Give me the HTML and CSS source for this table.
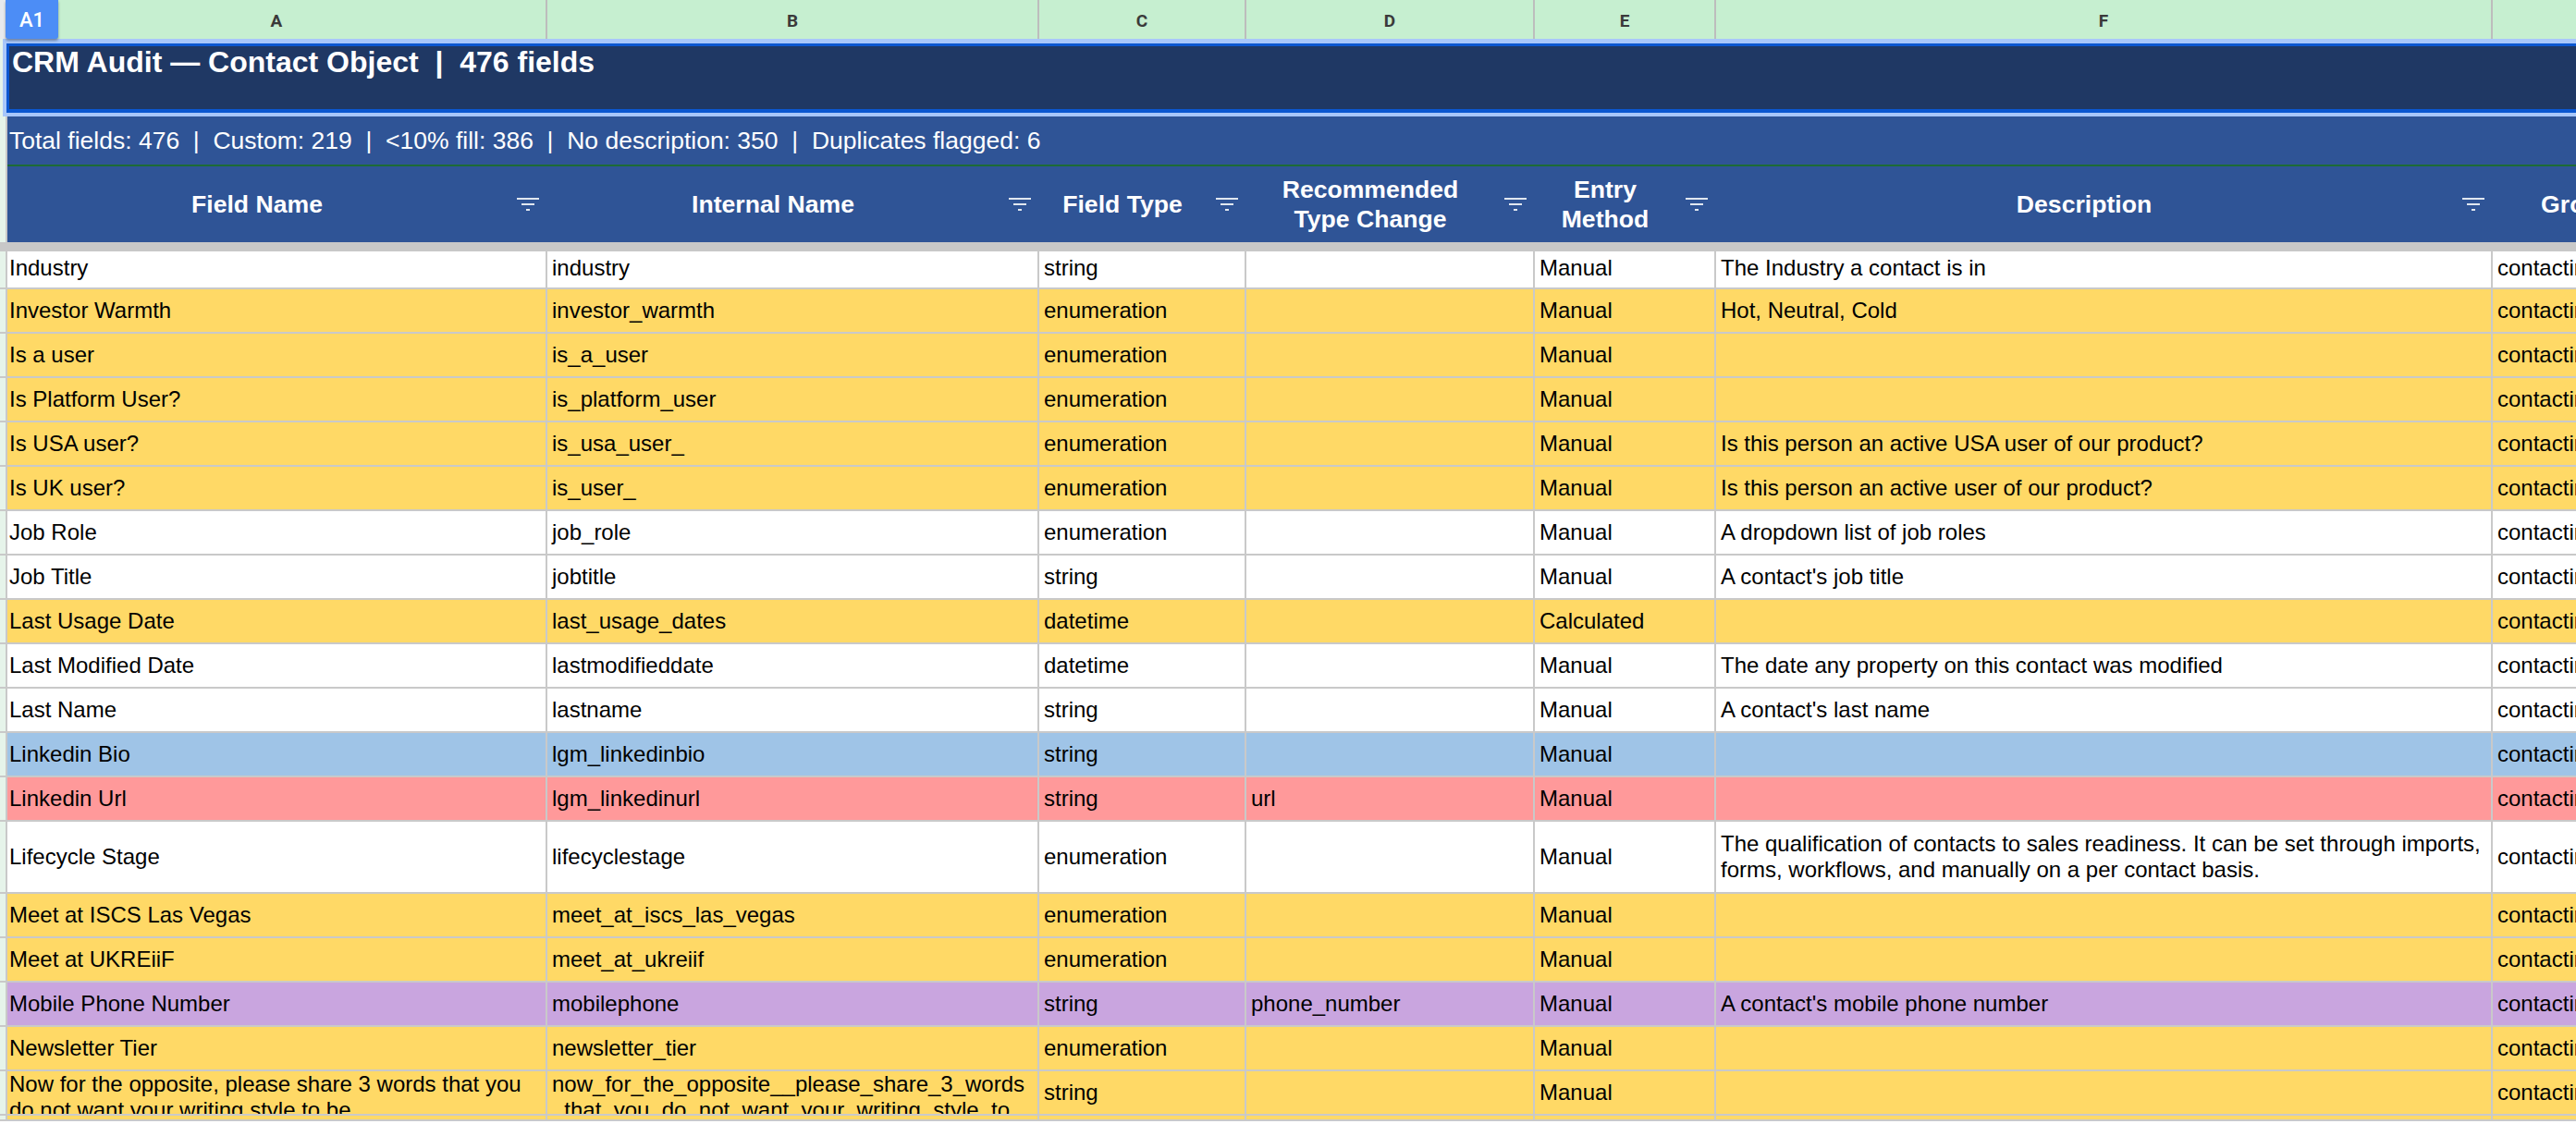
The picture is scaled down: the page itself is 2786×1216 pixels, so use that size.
FILE: index.html
```html
<!DOCTYPE html>
<html>
<head>
<meta charset="utf-8">
<title>CRM Audit — Contact Object</title>
<link rel="stylesheet" href="styles.css">
</head>
<body>
<div class="badge">A1</div>
<div class="sheet">
  <div class="row colhead">
    <div class="c corner"></div><div class="c">A</div><div class="c">B</div><div class="c">C</div><div class="c">D</div><div class="c">E</div><div class="c">F</div><div class="c">G</div>
  </div>
  <div class="title-row">
    <div class="title">CRM Audit — Contact Object  |  476 fields</div>
  </div>
  <div class="stats-row">
    <div class="strip"></div>
    <div class="stats">Total fields: 476  |  Custom: 219  |  &lt;10% fill: 386  |  No description: 350  |  Duplicates flagged: 6</div>
  </div>
  <div class="row hrow">
    <div class="strip"></div>
    <div class="hc"><span class="lbl">Field Name</span><svg class="flt" viewBox="0 0 24 14"><rect x="0" y="0" width="24" height="2"/><rect x="5" y="6" width="14" height="2"/><rect x="10" y="12" width="4" height="2"/></svg></div>
    <div class="hc"><span class="lbl">Internal Name</span><svg class="flt" viewBox="0 0 24 14"><rect x="0" y="0" width="24" height="2"/><rect x="5" y="6" width="14" height="2"/><rect x="10" y="12" width="4" height="2"/></svg></div>
    <div class="hc"><span class="lbl">Field Type</span><svg class="flt" viewBox="0 0 24 14"><rect x="0" y="0" width="24" height="2"/><rect x="5" y="6" width="14" height="2"/><rect x="10" y="12" width="4" height="2"/></svg></div>
    <div class="hc"><span class="lbl">Recommended<br>Type Change</span><svg class="flt" viewBox="0 0 24 14"><rect x="0" y="0" width="24" height="2"/><rect x="5" y="6" width="14" height="2"/><rect x="10" y="12" width="4" height="2"/></svg></div>
    <div class="hc"><span class="lbl">Entry<br>Method</span><svg class="flt" viewBox="0 0 24 14"><rect x="0" y="0" width="24" height="2"/><rect x="5" y="6" width="14" height="2"/><rect x="10" y="12" width="4" height="2"/></svg></div>
    <div class="hc"><span class="lbl">Description</span><svg class="flt" viewBox="0 0 24 14"><rect x="0" y="0" width="24" height="2"/><rect x="5" y="6" width="14" height="2"/><rect x="10" y="12" width="4" height="2"/></svg></div>
    <div class="hc"><span class="lbl">Group</span><svg class="flt" viewBox="0 0 24 14"><rect x="0" y="0" width="24" height="2"/><rect x="5" y="6" width="14" height="2"/><rect x="10" y="12" width="4" height="2"/></svg></div>
  </div>
  <div class="freeze"></div>

  <div class="row drow first"><div class="strip"></div><div class="cell a">Industry</div><div class="cell">industry</div><div class="cell">string</div><div class="cell"></div><div class="cell">Manual</div><div class="cell">The Industry a contact is in</div><div class="cell">contactinformation</div></div>
  <div class="row drow yellow"><div class="strip"></div><div class="cell a">Investor Warmth</div><div class="cell">investor_warmth</div><div class="cell">enumeration</div><div class="cell"></div><div class="cell">Manual</div><div class="cell">Hot, Neutral, Cold</div><div class="cell">contactinformation</div></div>
  <div class="row drow yellow"><div class="strip"></div><div class="cell a">Is a user</div><div class="cell">is_a_user</div><div class="cell">enumeration</div><div class="cell"></div><div class="cell">Manual</div><div class="cell"></div><div class="cell">contactinformation</div></div>
  <div class="row drow yellow"><div class="strip"></div><div class="cell a">Is Platform User?</div><div class="cell">is_platform_user</div><div class="cell">enumeration</div><div class="cell"></div><div class="cell">Manual</div><div class="cell"></div><div class="cell">contactinformation</div></div>
  <div class="row drow yellow"><div class="strip"></div><div class="cell a">Is USA user?</div><div class="cell">is_usa_user_</div><div class="cell">enumeration</div><div class="cell"></div><div class="cell">Manual</div><div class="cell">Is this person an active USA user of our product?</div><div class="cell">contactinformation</div></div>
  <div class="row drow yellow"><div class="strip"></div><div class="cell a">Is UK user?</div><div class="cell">is_user_</div><div class="cell">enumeration</div><div class="cell"></div><div class="cell">Manual</div><div class="cell">Is this person an active user of our product?</div><div class="cell">contactinformation</div></div>
  <div class="row drow"><div class="strip"></div><div class="cell a">Job Role</div><div class="cell">job_role</div><div class="cell">enumeration</div><div class="cell"></div><div class="cell">Manual</div><div class="cell">A dropdown list of job roles</div><div class="cell">contactinformation</div></div>
  <div class="row drow"><div class="strip"></div><div class="cell a">Job Title</div><div class="cell">jobtitle</div><div class="cell">string</div><div class="cell"></div><div class="cell">Manual</div><div class="cell">A contact's job title</div><div class="cell">contactinformation</div></div>
  <div class="row drow yellow"><div class="strip"></div><div class="cell a">Last Usage Date</div><div class="cell">last_usage_dates</div><div class="cell">datetime</div><div class="cell"></div><div class="cell">Calculated</div><div class="cell"></div><div class="cell">contactinformation</div></div>
  <div class="row drow"><div class="strip"></div><div class="cell a">Last Modified Date</div><div class="cell">lastmodifieddate</div><div class="cell">datetime</div><div class="cell"></div><div class="cell">Manual</div><div class="cell">The date any property on this contact was modified</div><div class="cell">contactinformation</div></div>
  <div class="row drow"><div class="strip"></div><div class="cell a">Last Name</div><div class="cell">lastname</div><div class="cell">string</div><div class="cell"></div><div class="cell">Manual</div><div class="cell">A contact's last name</div><div class="cell">contactinformation</div></div>
  <div class="row drow blue"><div class="strip"></div><div class="cell a">Linkedin Bio</div><div class="cell">lgm_linkedinbio</div><div class="cell">string</div><div class="cell"></div><div class="cell">Manual</div><div class="cell"></div><div class="cell">contactinformation</div></div>
  <div class="row drow red"><div class="strip"></div><div class="cell a">Linkedin Url</div><div class="cell">lgm_linkedinurl</div><div class="cell">string</div><div class="cell">url</div><div class="cell">Manual</div><div class="cell"></div><div class="cell">contactinformation</div></div>
  <div class="row drow tall"><div class="strip"></div><div class="cell a">Lifecycle Stage</div><div class="cell">lifecyclestage</div><div class="cell">enumeration</div><div class="cell"></div><div class="cell">Manual</div><div class="cell"><span>The qualification of contacts to sales readiness. It can be set through imports, forms, workflows, and manually on a per contact basis.</span></div><div class="cell">contactinformation</div></div>
  <div class="row drow yellow"><div class="strip"></div><div class="cell a">Meet at ISCS Las Vegas</div><div class="cell">meet_at_iscs_las_vegas</div><div class="cell">enumeration</div><div class="cell"></div><div class="cell">Manual</div><div class="cell"></div><div class="cell">contactinformation</div></div>
  <div class="row drow yellow"><div class="strip"></div><div class="cell a">Meet at UKREiiF</div><div class="cell">meet_at_ukreiif</div><div class="cell">enumeration</div><div class="cell"></div><div class="cell">Manual</div><div class="cell"></div><div class="cell">contactinformation</div></div>
  <div class="row drow purple"><div class="strip"></div><div class="cell a">Mobile Phone Number</div><div class="cell">mobilephone</div><div class="cell">string</div><div class="cell">phone_number</div><div class="cell">Manual</div><div class="cell">A contact's mobile phone number</div><div class="cell">contactinformation</div></div>
  <div class="row drow yellow"><div class="strip"></div><div class="cell a">Newsletter Tier</div><div class="cell">newsletter_tier</div><div class="cell">enumeration</div><div class="cell"></div><div class="cell">Manual</div><div class="cell"></div><div class="cell">contactinformation</div></div>
  <div class="row drow yellow"><div class="strip"></div><div class="cell a top"><span>Now for the opposite, please share 3 words that you do not want your writing style to be</span></div><div class="cell top"><span>now_for_the_opposite__please_share_3_words<wbr>_that_you_do_not_want_your_writing_style_to<wbr>_be</span></div><div class="cell">string</div><div class="cell"></div><div class="cell">Manual</div><div class="cell"></div><div class="cell">contactinformation</div></div>
  <div class="row drow yellow stub"><div class="strip"></div><div class="cell a"></div><div class="cell"></div><div class="cell"></div><div class="cell"></div><div class="cell"></div><div class="cell"></div><div class="cell"></div></div>
</div>
</body>
</html>
```
FILE: styles.css
```css
:root {
  --cols: 8px 584px 532px 224px 312px 196px 840px 228px;
  --grid: #c9c9c9;
  --strip: #e6f4ea;
  --navy: #1f3864;
  --blue: #2f5496;
}
* { box-sizing: border-box; }
html, body { margin: 0; padding: 0; }
body {
  width: 2786px;
  height: 1216px;
  overflow: hidden;
  position: relative;
  background: #ffffff;
  font-family: "Liberation Sans", Arial, sans-serif;
  color: #000;
}
.sheet { width: 2924px; }
.row { display: grid; grid-template-columns: var(--cols); }

/* column letters */
.colhead { height: 42px; background: #c6efd0; }
.colhead .c {
  border-right: 2px solid #bdbdbd;
  display: flex;
  align-items: center;
  justify-content: center;
  font-family: Roboto, "Liberation Sans", sans-serif;
  font-weight: 700;
  font-size: 19px;
  color: #3a3a3a;
  padding-top: 2px;
}
.colhead .corner { border-right: none; background: #e8eaed; }
.badge {
  position: absolute;
  left: 6px;
  top: 0;
  width: 57px;
  height: 42px;
  background: #4c8df6;
  color: #fff;
  font-family: Roboto, "Liberation Sans", sans-serif;
  font-weight: 500;
  font-size: 22px;
  display: flex;
  align-items: center;
  justify-content: center;
  border-radius: 0 0 3px 3px;
  box-shadow: 0 2px 3px rgba(0, 0, 0, 0.35);
  z-index: 2;
}

/* title */
.title-row { display: flex; height: 84px; background: var(--strip); padding-left: 3px; }
.title {
  flex: 1;
  background: var(--navy);
  border: 4px solid #a8c7fa;
  border-top-width: 5px;
  box-shadow: inset 3px 0 0 #0b57d0, inset 0 3px 0 #0b57d0, inset 0 -4px 0 #0b57d0;
  color: #fff;
  font-weight: 700;
  font-size: 32px;
  line-height: 36px;
  padding: 2px 0 0 6px;
  white-space: pre;
}

/* stats */
.stats-row { display: flex; height: 54px; }
.strip { background: var(--strip); border-right: 2px solid var(--grid); }
.stats-row .strip { width: 8px; flex: none; }
.stats {
  flex: 1;
  background: var(--blue);
  color: #fff;
  font-size: 26.5px;
  line-height: 52px;
  padding-left: 2px;
  border-bottom: 2px solid #1d6b36;
  white-space: pre;
}

/* header */
.hrow { height: 82px; }
.hc {
  background: var(--blue);
  color: #fff;
  font-weight: 700;
  font-size: 26.6px;
  line-height: 32px;
  display: flex;
  align-items: center;
  overflow: hidden;
  white-space: nowrap;
}
.hc .lbl { flex: 1; text-align: center; }
.flt { width: 24px; height: 14px; margin: 0 9px 0 11px; flex: none; fill: rgba(255, 255, 255, 0.86); }

.freeze { height: 10px; background: #c8c8c8; }

/* data */
.drow { height: 48px; }
.drow .strip { border-bottom: 2px solid var(--grid); }
.cell {
  background: #fff;
  border-right: 2px solid var(--grid);
  border-bottom: 2px solid var(--grid);
  padding: 0 5px;
  display: flex;
  align-items: center;
  font-size: 24px;
  line-height: 28px;
  overflow: hidden;
  white-space: normal;
}
.cell.a { padding-left: 2px; }
.cell.top { align-items: flex-start; }
.drow.first { height: 41px; }
.drow.first .cell { padding-bottom: 4px; }
.drow.tall { height: 78px; }
.drow.stub { height: 6px; }

.yellow .cell { background: #ffd966; }
.blue .cell { background: #9fc4e7; }
.red .cell { background: #ff999a; }
.purple .cell { background: #c9a5df; }
```
